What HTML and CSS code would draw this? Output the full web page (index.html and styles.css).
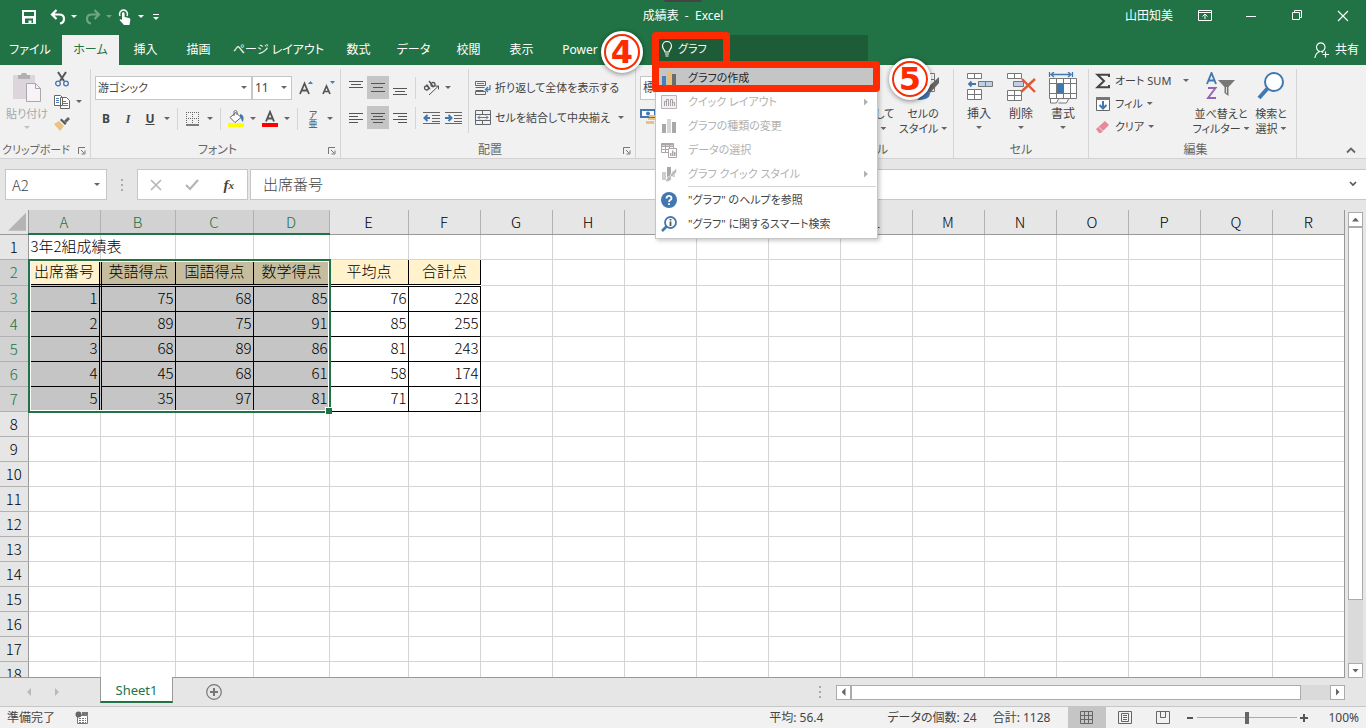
FILE: index.html
```html
<!DOCTYPE html>
<html lang="ja">
<head>
    <meta charset="utf-8">
    <title>成績表 - Excel</title>
    <link rel="stylesheet" href="styles.css">
</head>
<body>
    <header class="titlebar">
        <div class="quick-access">
            <button type="button" aria-label="上書き保存"><svg width="16" height="16"><path d="M1 1h14v14H1z" fill="#fff"/><path d="M3 3h10v4H3zM4 9.500h8V14h-1.500v-2.500h-3V14H4z" fill="#217346"/></svg></button>
            <button type="button" aria-label="元に戻す"><svg width="16" height="16"><path d="M6.500 1L2 5.500 6.500 10M2.500 5.500H9c7 0 6 8 1 9" fill="none" stroke="#fff" stroke-width="2.200"/></svg></button>
            <span class="caret light"></span>
            <button type="button" class="faded" aria-label="やり直し"><svg width="16" height="16"><path d="M9.500 1L14 5.500 9.500 10M13.500 5.500H7c-7 0-6 8-1 9" fill="none" stroke="#fff" stroke-width="2.200"/></svg></button>
            <span class="caret light faded"></span>
            <button type="button" aria-label="タッチ/マウス モード"><svg width="16" height="18"><path d="M3 8a4 4 0 1 1 7 0" fill="none" stroke="#fff" stroke-width="1.500"/><path d="M5 5.500c0-1.800 2.600-1.800 2.600 0V9l4.400 1c1 .3 1.500 1 1.300 2L12.500 17H7L2.500 12c.5-1 1.500-1 2.500 0z" fill="#fff"/></svg></button>
            <span class="caret light"></span>
            <button type="button" class="customize" aria-label="クイック アクセス ツール バーのカスタマイズ"><svg width="8" height="8"><path d="M1 1.500h6" stroke="#fff"/><path d="M1 4h6L4 7z" fill="#fff"/></svg></button>
        </div>
        <div class="doc-title">成績表&nbsp; - &nbsp;Excel</div>
        <div class="window-controls">
            <span class="user-name">山田知美</span>
            <button type="button" aria-label="リボンの表示オプション"><svg width="14" height="12"><path d="M.5.5h13v10H.5zM.5 2.500h13M7 9V4.500M4.500 6.500L7 4l2.500 2.500" fill="none" stroke="#fff"/></svg></button>
            <button type="button" aria-label="最小化"><svg width="12" height="12"><path d="M1 6.500h10" stroke="#fff"/></svg></button>
            <button type="button" aria-label="元のサイズに戻す"><svg width="11" height="11"><path d="M.5 2.500h7v7h-7zM2.500 2V.5h7v7H8" fill="none" stroke="#fff"/></svg></button>
            <button type="button" aria-label="閉じる"><svg width="12" height="12"><path d="M1 1l10 10M11 1L1 11" stroke="#fff" stroke-width="1.200"/></svg></button>
        </div>
        <span class="top-notch"></span>
    </header>

    <div class="tabbar">
        <nav class="tabs">
            <a href="#">ファイル</a>
            <a href="#" class="active">ホーム</a>
            <a href="#">挿入</a>
            <a href="#">描画</a>
            <a href="#">ページ レイアウト</a>
            <a href="#">数式</a>
            <a href="#">データ</a>
            <a href="#">校閲</a>
            <a href="#">表示</a>
            <a href="#">Power</a>
        </nav>
        <div class="tellme">
            <label class="tellme-box">
                <svg width="12" height="16"><path d="M4 11C4 9 1.500 8 1.500 5a4.500 4.500 0 0 1 9 0C10.500 8 8 9 8 11zM4 13h4M4.500 15h3" fill="none" stroke="#fff" stroke-width="1.200"/></svg>
                <input type="text" value="グラフ" aria-label="操作アシスト">
            </label>
            <div class="tellme-menu" role="menu">
                <button type="button" role="menuitem" class="highlight">
                    <svg width="16" height="16"><path d="M1 6h4v9H1z" fill="#4a7ebb"/><path d="M6 1h4v14H6z" fill="#e8bf7a"/><path d="M11 4h4v11h-4z" fill="#6b6b6b"/></svg>
                    <span>グラフの作成</span>
                </button>
                <button type="button" role="menuitem" disabled>
                    <svg width="16" height="16"><path d="M.5 1.500h15v13H.5z" fill="#f3f0f3" stroke="#b8b4b8"/><path d="M3.500 12V7.500h2M5.500 12V5.500h2V12M9.500 12V5.500h2V12M11.500 8.500h2V12" fill="none" stroke="#a5a1a5"/></svg>
                    <span>クイック レイアウト</span><i class="submenu-arrow"></i>
                </button>
                <button type="button" role="menuitem" disabled>
                    <svg width="16" height="16"><path d="M1 6h4v9H1zM11 4h4v11h-4z" fill="#aaa6aa"/><path d="M6 1h4v14H6z" fill="#d8d4d8"/></svg>
                    <span>グラフの種類の変更</span>
                </button>
                <button type="button" role="menuitem" disabled>
                    <svg width="16" height="16"><path d="M.5 1.500h12v9H.5zM.5 4.500h12M.5 7.500h12M4.500 1.500v9M8.500 1.500v9" fill="none" stroke="#aaa6aa"/><path d="M.5 1.500h12v2H.5z" fill="#aaa6aa"/><path d="M7.500 6.500h8v9h-8z" fill="#fff" stroke="#aaa6aa"/><path d="M9 11h1.500v3H9zM11 8.500h1.500V14H11zM13 10h1.500v4H13z" fill="#aaa6aa"/></svg>
                    <span>データの選択</span>
                </button>
                <button type="button" role="menuitem" disabled>
                    <svg width="16" height="16"><path d="M1 6h4v8H1zM11 5h3v6h-3z" fill="#d0ccd0"/><path d="M6 1h4v10H6z" fill="#aaa6aa"/><path d="M15.500 2L9 9l2 2 4.500-5zM8.500 10l2 2c0 3-4 4-6.500 3 2-1 1.500-4 4.500-5z" fill="#b8b4b8" stroke="#fff" stroke-width=".6"/></svg>
                    <span>グラフ クイック スタイル</span><i class="submenu-arrow"></i>
                </button>
                <hr>
                <button type="button" role="menuitem">
                    <svg width="16" height="16"><circle cx="8" cy="8" r="8" fill="#4178b0"/><path d="M5.500 6.500c0-3.500 5-3.300 5-.3 0 2-2.500 1.800-2.500 3.800M8 11.200v1.800" fill="none" stroke="#fff" stroke-width="1.800"/></svg>
                    <span>"グラフ" のヘルプを参照</span>
                </button>
                <button type="button" role="menuitem">
                    <svg width="16" height="16"><circle cx="9.500" cy="6.500" r="5.500" fill="none" stroke="#4178b0" stroke-width="1.800"/><path d="M5.500 10.500L1 15" stroke="#4178b0" stroke-width="2.600"/><path d="M9.500 3v1.600M9.500 5.600V10" stroke="#555" stroke-width="1.800"/></svg>
                    <span>"グラフ" に関するスマート検索</span>
                </button>
            </div>
            <span class="frame frame-search"></span>
            <span class="frame frame-item"></span>
            <span class="step step-four">4</span>
            <span class="step step-five">5</span>
        </div>
        <button type="button" class="share"><svg width="16" height="17"><path d="M7 9.500a4.300 4.300 0 1 0-.5 0C3 10 1.500 12.500.8 16M7 9.500c1 .3 1.500.5 2 1M11.500 9.500v6M8.500 12.500h6.500" fill="none" stroke="#fff" stroke-width="1.200"/></svg>共有</button>
    </div>

    <section class="ribbon">
        <div class="group clipboard">
            <div class="group-body">
                <button type="button" class="big disabled">
                    <svg width="30" height="30"><path d="M1 3h22v24H1z" fill="#dcd6dc"/><path d="M6 7V3h3c0-3 6-3 6 0h3v4z" fill="#b2aeb2"/><path d="M14.500 11.500h9l5 5v13h-14z" fill="#f7f4f8" stroke="#aaa6aa"/><path d="M23.500 11.500v5h5" fill="none" stroke="#aaa6aa"/></svg>
                    <span>貼り付け</span>
                    <span class="caret faded"></span>
                </button>
                <div class="stack">
                    <button type="button" aria-label="切り取り"><svg width="16" height="16"><path d="M4 1l6 9M12 1L6 10" stroke="#555" stroke-width="2"/><circle cx="4" cy="12.500" r="2.300" fill="none" stroke="#4178b0" stroke-width="1.300"/><circle cx="12" cy="12.500" r="2.300" fill="none" stroke="#4178b0" stroke-width="1.300"/></svg></button>
                    <div class="row">
                        <button type="button" aria-label="コピー"><svg width="16" height="15"><path d="M.5 1.500h6l2 2v8h-8zM6.500 3.500h6l3 3v8h-9z" fill="#fff" stroke="#666"/><path d="M2 4.500h3M2 6.500h3M2 8.500h3M8 7.500h4M8 9.500h6M8 11.500h6" stroke="#4a7ebb"/></svg></button>
                        <span class="caret"></span>
                    </div>
                    <button type="button" aria-label="書式のコピー/貼り付け"><svg width="16" height="15"><path d="M0 8l5-3 5 5-4 5z" fill="#eac283"/><path d="M6 4l5 5 1.500-1.500-5-5z" fill="#555"/><path d="M11 6l4-4" stroke="#666" stroke-width="3"/></svg></button>
                </div>
            </div>
            <div class="group-label">クリップボード</div>
            <button type="button" class="launcher" aria-label="クリップボードの詳細"><svg width="8" height="8"><path d="M.5 7V.5H7M3 3l3 3M7 3.500V7H3.500" fill="none" stroke="#777"/></svg></button>
        </div>

        <div class="group font">
            <div class="group-body column">
                <div class="row">
                    <label class="combo font-name"><select aria-label="フォント"><option>游ゴシック</option></select><span class="caret"></span></label>
                    <label class="combo font-size"><select aria-label="フォント サイズ"><option>11</option></select><span class="caret"></span></label>
                    <button type="button" class="grow-font" aria-label="フォント サイズの拡大"><svg width="16" height="16"><path d="M1 14L5.500 3.500 10 14M2.500 10.500h6" fill="none" stroke="#555" stroke-width="1.800"/><path d="M9 4l2.500-3L14 4z" fill="#4a7ebb"/></svg></button>
                    <button type="button" aria-label="フォント サイズの縮小"><svg width="16" height="16"><path d="M2 14L5.500 6 9 14M3 11.500h5" fill="none" stroke="#555" stroke-width="1.700"/><path d="M9 1h5l-2.500 3z" fill="#4a7ebb"/></svg></button>
                </div>
                <div class="row">
                    <button type="button" class="bold">B</button>
                    <button type="button" class="italic">I</button>
                    <button type="button" class="underline">U</button>
                    <span class="caret"></span>
                    <span class="sep"></span>
                    <button type="button" aria-label="罫線"><svg width="14" height="14"><path d="M.5 0v12M6.500 0v12M12.500 0v12M0 .5h13M0 6.500h13" stroke="#666" stroke-dasharray="1 1"/><path d="M0 13h13" stroke="#555" stroke-width="1.500"/></svg></button>
                    <span class="caret"></span>
                    <span class="sep"></span>
                    <button type="button" aria-label="塗りつぶしの色"><svg width="17" height="17"><path d="M2 7.500l6-5 5 5-6 5z" fill="#fff" stroke="#666"/><path d="M6 6V2c0-2 3-2 3 0v3" fill="none" stroke="#666"/><path d="M12 4c4 1 4 4 3 8-2-1-1-3-3-5z" fill="#4178b0"/><path d="M0 13h16v4H0z" fill="#ff0"/></svg></button>
                    <span class="caret"></span>
                    <button type="button" aria-label="フォントの色"><svg width="17" height="17"><path d="M4 11.500L8 2l4 9.500M5.500 8.500h5" fill="none" stroke="#555" stroke-width="1.900"/><path d="M0 13h16v4H0z" fill="red"/></svg></button>
                    <span class="caret"></span>
                    <span class="sep"></span>
                    <button type="button" class="ruby"><span>ア</span><span>亜</span></button>
                    <span class="caret"></span>
                </div>
            </div>
            <div class="group-label">フォント</div>
            <button type="button" class="launcher" aria-label="フォントの設定"><svg width="8" height="8"><path d="M.5 7V.5H7M3 3l3 3M7 3.500V7H3.500" fill="none" stroke="#777"/></svg></button>
        </div>

        <div class="group alignment">
            <div class="group-body">
                <div class="column align-tools">
                    <div class="row">
                        <button type="button" aria-label="上揃え"><svg width="14" height="16"><path d="M0 1.500h14M2 4.500h10M0 7.500h14" stroke="#555"/></svg></button>
                        <button type="button" class="pressed" aria-label="上下中央揃え"><svg width="14" height="16"><path d="M0 3.500h14M2 7.500h10M0 11.500h14" stroke="#555"/></svg></button>
                        <button type="button" aria-label="下揃え"><svg width="14" height="16"><path d="M0 8.500h14M2 11.500h10M0 14.500h14" stroke="#555"/></svg></button>
                        <span class="sep"></span>
                        <button type="button" aria-label="方向"><svg width="17" height="16"><circle cx="3.500" cy="8" r="2" fill="none" stroke="#555" stroke-width="1.300"/><path d="M3.500 4.500L7 9M6 1l4.500 6" stroke="#555" stroke-width="1.300"/><circle cx="10" cy="4.500" r="2" fill="none" stroke="#555" stroke-width="1.300"/><path d="M6 15l9.500-9M12 6h3.500v3.500" fill="none" stroke="#555"/></svg></button>
                        <span class="caret"></span>
                    </div>
                    <div class="row">
                        <button type="button" aria-label="左揃え"><svg width="14" height="14"><path d="M0 2.500h14M0 5.500h9M0 8.500h14M0 11.500h9" stroke="#555"/></svg></button>
                        <button type="button" class="pressed" aria-label="中央揃え"><svg width="14" height="14"><path d="M0 2.500h14M2 5.500h10M0 8.500h14M2 11.500h10" stroke="#555"/></svg></button>
                        <button type="button" aria-label="右揃え"><svg width="14" height="14"><path d="M0 2.500h14M5 5.500h9M0 8.500h14M5 11.500h9" stroke="#555"/></svg></button>
                        <span class="sep"></span>
                        <button type="button" aria-label="インデントを減らす"><svg width="17" height="14"><path d="M0 1.500h17M9 4.500h8M9 7.500h8M9 10.500h8M0 12.500h17" stroke="#666"/><path d="M7 7H2M4.500 4L1.500 7l3 3" fill="none" stroke="#4178b0" stroke-width="2"/></svg></button>
                        <button type="button" aria-label="インデントを増やす"><svg width="17" height="14"><path d="M0 1.500h17M9 4.500h8M9 7.500h8M9 10.500h8M0 12.500h17" stroke="#666"/><path d="M0 7h5M3.500 4l3 3-3 3" fill="none" stroke="#4178b0" stroke-width="2"/></svg></button>
                    </div>
                </div>
                <div class="column wrap-tools">
                    <button type="button" class="wide"><svg width="16" height="16"><path d="M.5 1.500h10v4H.5zM.5 7.500h9M.5 10.500h8M.5 14.500h10v-3H.5z" fill="none" stroke="#666"/><path d="M2 3.500h7" stroke="#4a7ebb"/><path d="M15 5v4.500h-4M13 7l-2.500 2.500L13 12" fill="none" stroke="#4a7ebb" stroke-width="1.300"/></svg><span>折り返して全体を表示する</span></button>
                    <div class="row">
                        <button type="button" class="wide"><svg width="16" height="16"><path d="M.5.5h15v14H.5zM.5 4.500h15M.5 10.500h15M7.500.5v4M7.500 10.500v4" fill="none" stroke="#666"/><path d="M3 7.500h10M5 5.500l-2 2 2 2M11 5.500l2 2-2 2" fill="none" stroke="#4a7ebb"/></svg><span>セルを結合して中央揃え</span></button>
                        <span class="caret"></span>
                    </div>
                </div>
            </div>
            <div class="group-label">配置</div>
            <button type="button" class="launcher" aria-label="配置の設定"><svg width="8" height="8"><path d="M.5 7V.5H7M3 3l3 3M7 3.500V7H3.500" fill="none" stroke="#777"/></svg></button>
        </div>

        <div class="group number-format">
            <div class="group-body column">
                <label class="combo"><select aria-label="表示形式"><option>標準</option></select><span class="caret"></span></label>
                <div class="row">
                    <button type="button" aria-label="通貨表示形式"><svg width="16" height="16"><path d="M1 2h14v7H1z" fill="#fff" stroke="#4178b0" stroke-width="2"/><circle cx="8" cy="5.500" r="2" fill="#4178b0"/><path d="M9 7h7v2H9zM8 10h8v2H8zM6 13h8v3H6z" fill="#eac283"/></svg></button>
                </div>
            </div>
        </div>

        <div class="group styles">
            <div class="group-body">
                <button type="button" class="big two-line table-style"><svg width="28" height="28"><path d="M1.500 3.500h24v22h-24zM1.500 9.500h24M1.500 15.500h24M9.500 3.500v22M17.500 3.500v22" fill="#fff" stroke="#777"/></svg><span>テーブルとして<br>書式設定 <i class="caret"></i></span></button>
                <button type="button" class="big two-line cell-style"><svg width="36" height="30"><path d="M4.500 1.500h25v18h-25zM4.500 7.500h25M4.500 13.500h25M24.500 1.500v18" fill="#fff" stroke="#777"/><path d="M34 5v6l-9 10-4-4z" fill="#666"/><path d="M21 17l4 4c0 6-6 7-13 7 4-2 4-9 9-11z" fill="#4178b0"/></svg><span>セルの<br>スタイル <i class="caret"></i></span></button>
            </div>
            <div class="group-label">スタイル</div>
        </div>

        <div class="group cells">
            <div class="group-body">
                <button type="button" class="big"><svg width="28" height="30"><path d="M2.500 1.500h14v5h-14zM9.500 1.500v5M2.500 17.500h14v10h-14zM2.500 22.500h14M9.500 17.500v10" fill="#fff" stroke="#777"/><path d="M13.500 9.500h14v5h-14zM20.500 9.500v5" fill="#bdd0e9" stroke="#777"/><path d="M11 12H4M6.500 9.500L4 12l2.500 2.500" fill="none" stroke="#4178b0" stroke-width="1.800"/></svg><span>挿入</span><span class="caret"></span></button>
                <button type="button" class="big"><svg width="30" height="30"><path d="M1.500 1.500h14v5h-14zM8.500 1.500v5M1.500 18.500h14v10h-14zM1.500 23.500h14M8.500 18.500v10" fill="#fff" stroke="#777"/><path d="M7.500 9.500h10v5h-10z" fill="#bdd0e9" stroke="#777"/><path d="M16 7l13 13M29 7L15 20" stroke="#dd5b37" stroke-width="2.400"/></svg><span>削除</span><span class="caret"></span></button>
                <button type="button" class="big"><svg width="30" height="32"><path d="M1.500 0v5M24.500 0v5M3 2.500h20M6 0L3 2.500l3 2.500M20 0l3 2.500-3 2.500" fill="none" stroke="#4178b0" stroke-width="1.300"/><path d="M2.500 26v5h6l2-4M10.500 31h8l2-4" fill="#fff" stroke="#777"/><path d="M1.500 6.500h27v20h-27zM1.500 11.500h27M1.500 21.500h27M8.500 6.500v20M15.500 6.500v20M22.500 6.500v20" fill="#fff" stroke="#777"/><path d="M9 12h7v9H9z" fill="#4178b0"/></svg><span>書式</span><span class="caret"></span></button>
            </div>
            <div class="group-label">セル</div>
        </div>

        <div class="group editing">
            <div class="group-body">
                <div class="edit-list">
                    <button type="button" class="wide"><svg width="16" height="16"><path d="M14 4V1.800H2.500L9 8l-6.500 6.200H14V12" fill="none" stroke="#444" stroke-width="2"/></svg><span>オート SUM</span><span class="caret"></span></button>
                    <button type="button" class="wide"><svg width="16" height="16"><path d="M1.500 1.500h13v13h-13z" fill="#fff" stroke="#666"/><path d="M1 1h14v3H1z" fill="#777"/><path d="M8 5v7M4.500 9L8 12.500 11.500 9" fill="none" stroke="#4178b0" stroke-width="2"/></svg><span>フィル</span><span class="caret"></span></button>
                    <button type="button" class="wide"><svg width="16" height="16"><path d="M1 10l9-8 4 4-8 8H4z" fill="#e8899b"/><path d="M3.500 8l4.500 4" stroke="#f6dbe0"/></svg><span>クリア</span><span class="caret"></span></button>
                </div>
                <button type="button" class="big two-line sort"><svg width="30" height="30"><path d="M1 12L5.500 1 10 12M2.500 8.500h6" fill="none" stroke="#4178b0" stroke-width="1.900"/><path d="M2 16h7.500L2 26h8" fill="none" stroke="#9562b6" stroke-width="1.900"/><path d="M12 8h17l-6.500 7v9l-4-3v-6z" fill="#777"/><path d="M20.500 15v6" stroke="#ddd"/></svg><span>並べ替えと<br>フィルター <i class="caret"></i></span></button>
                <button type="button" class="big two-line find"><svg width="30" height="30"><circle cx="18" cy="10" r="9" fill="#fff" stroke="#4178b0" stroke-width="2"/><path d="M11.500 16.500L3 26" stroke="#4178b0" stroke-width="4"/></svg><span>検索と<br>選択 <i class="caret"></i></span></button>
            </div>
            <div class="group-label">編集</div>
        </div>
        <button type="button" class="collapse" aria-label="リボンを折りたたむ"><svg width="10" height="8"><path d="M1 6.500L5 2.500l4 4" fill="none" stroke="#666" stroke-width="1.800"/></svg></button>
    </section>

    <div class="formula-bar">
        <label class="name-box"><input type="text" value="A2" aria-label="名前ボックス"><span class="caret"></span></label>
        <span class="grip"></span>
        <div class="formula-buttons">
            <button type="button" aria-label="キャンセル"><svg width="12" height="12"><path d="M1 1l10 10M11 1L1 11" stroke="#b5b5b5" stroke-width="1.600"/></svg></button>
            <button type="button" aria-label="入力"><svg width="14" height="12"><path d="M1 6l4 4 8-9" fill="none" stroke="#b5b5b5" stroke-width="2.200"/></svg></button>
            <button type="button" class="fx" aria-label="関数の挿入">f<small>x</small></button>
        </div>
        <label class="formula"><input type="text" value="出席番号" aria-label="数式バー"><svg width="8" height="6"><path d="M1 1l3 3 3-3" fill="none" stroke="#555" stroke-width="1.600"/></svg></label>
    </div>

    <main class="workspace">
        <div class="sheet">
            <table id="grid"></table>
            <div class="selection"><span class="fill-handle"></span></div>
        </div>
        <div class="scroll-v">
            <button type="button" aria-label="上へ"><i class="arrow up"></i></button>
            <span class="thumb"></span>
            <button type="button" aria-label="下へ"><i class="arrow down"></i></button>
        </div>
    </main>

    <div class="sheet-tabs">
        <div class="sheet-nav"><i class="arrow left"></i><i class="arrow right"></i></div>
        <a href="#" class="sheet-tab">Sheet1</a>
        <button type="button" class="add-sheet" aria-label="新しいシート"><svg width="16" height="16"><circle cx="8" cy="8" r="7.300" fill="none" stroke="#777" stroke-width="1.200"/><path d="M8 4v8M4 8h8" stroke="#777" stroke-width="2"/></svg></button>
        <span class="grip"></span>
        <div class="scroll-h">
            <button type="button" aria-label="左へ"><i class="arrow left"></i></button>
            <span class="thumb"></span>
            <button type="button" aria-label="右へ"><i class="arrow right"></i></button>
        </div>
    </div>

    <footer class="statusbar">
        <span>準備完了</span>
        <svg class="macro" width="14" height="14"><path d="M2.500 4.500h10v8h-10z" fill="#fff" stroke="#777"/><path d="M7 1h6v3H7z" fill="#777"/><circle cx="3.500" cy="3.500" r="3" fill="#666"/><path d="M4 7.500h7M4 9.500h7M4 11.500h7" stroke="#777" stroke-dasharray="2 1"/></svg>
        <div class="stats">
            <span class="average">平均: 56.4</span>
            <span>データの個数: 24</span>
            <span>合計: 1128</span>
        </div>
        <div class="views">
            <button type="button" class="pressed" aria-label="標準"><svg width="14" height="14"><path d="M.5.5h12v12H.5zM.5 4.500h12M.5 8.500h12M4.500.5v12M8.500.5v12" fill="none" stroke="#666"/></svg></button>
            <button type="button" aria-label="ページ レイアウト"><svg width="14" height="14"><path d="M.5.5h13v12H.5zM3.500 2.500h7v8h-7zM5 4.500h4M5 6.500h4M5 8.500h4" fill="none" stroke="#666"/></svg></button>
            <button type="button" aria-label="改ページ プレビュー"><svg width="14" height="14"><path d="M.5.5h13v12H.5zM4.500.5v6h5v-6M9.500 6.500h-5" fill="none" stroke="#666"/></svg></button>
        </div>
        <div class="zoom">
            <button type="button" aria-label="縮小"><svg width="8" height="8"><path d="M1 4h6" stroke="#555" stroke-width="2"/></svg></button>
            <input type="range" min="0" max="200" value="100" aria-label="ズーム">
            <button type="button" aria-label="拡大"><svg width="8" height="8"><path d="M0 4h8M4 0v8" stroke="#555" stroke-width="2"/></svg></button>
            <span class="zoom-value">100%</span>
        </div>
    </footer>

    <script src="script.js"></script>
</body>
</html>
```
FILE: styles.css
```css
* {
    box-sizing: border-box;
}

body {
    margin: 0;
    height: 100vh;
    display: flex;
    flex-direction: column;
    overflow: hidden;
    background: #e6e6e6;
    color: #444;
    font: 12px/16px "Noto Sans", "Noto Sans CJK JP", sans-serif;
    font-feature-settings: "palt";
}

button,
input,
select {
    font: inherit;
    font-feature-settings: inherit;
    color: inherit;
    background: none;
    border: 0;
    padding: 0;
    margin: 0;
    min-width: 0;
}

button {
    display: flex;
    align-items: center;
    justify-content: center;
    white-space: nowrap;
}

a {
    color: inherit;
    text-decoration: none;
}

svg {
    display: block;
    flex: none;
}

.row {
    display: flex;
    align-items: center;
}

.column {
    display: flex;
    flex-direction: column;
}

.caret {
    display: inline-block;
    flex: none;
    width: 6px;
    height: 3px;
    background: #666;
    clip-path: polygon(0 0, 100% 0, 50% 100%);
}

.caret.light {
    background: #fff;
}

.faded {
    opacity: 0.35;
}

/* title bar */
.titlebar {
    flex: none;
    height: 35px;
    display: grid;
    grid-template-columns: 1fr auto 1fr;
    align-items: center;
    background: #217346;
    color: #fff;
    position: relative;
}

.quick-access {
    display: flex;
    align-items: center;
    gap: 5px;
    padding: 0 0 2px 21px;
}

.quick-access button:nth-child(2) {
    margin-left: 8px;
}

.quick-access .caret + button {
    margin-left: 3px;
}

.quick-access .faded + button {
    margin-left: 0;
}

.quick-access .customize {
    margin-left: 9px;
}

.doc-title {
    padding-bottom: 4px;
}

.window-controls {
    display: flex;
    justify-content: flex-end;
    padding-bottom: 4px;
}

.window-controls button {
    width: 46px;
}

.window-controls .user-name {
    margin-right: 9px;
}

.top-notch {
    position: absolute;
    left: 664px;
    top: 0;
    width: 38px;
    height: 2px;
    border-radius: 0 0 2px 2px;
    background: #444;
}

/* ribbon tabs */
.tabbar {
    flex: none;
    height: 30px;
    display: flex;
    background: #217346;
    color: #fff;
}

.tabs {
    display: grid;
    grid-template-columns: 60px 59px 53px 53px 107px 53px 57px 53px 53px 64px;
    width: 654px;
}

.tabs a {
    text-align: center;
    line-height: 29px;
    white-space: nowrap;
}

.tabs .active {
    margin-left: 2px;
    background: #f1f1f1;
    color: #217346;
}

.share {
    gap: 5px;
    margin-left: auto;
    padding-right: 7px;
}

/* search box and its result menu */
.tellme {
    position: relative;
    z-index: 2;
    width: 214px;
    height: 27px;
    font-size: 11px;
}

.tellme-box {
    display: flex;
    align-items: center;
    gap: 5px;
    height: 27px;
    padding-left: 7px;
    background: #1e5c38;
}

.tellme-box input {
    width: 150px;
}

.tellme-menu {
    position: absolute;
    left: 1px;
    top: 29px;
    width: 223px;
    padding: 1px 1px 2px;
    background: #fff;
    border: 1px solid #c6c6c6;
    box-shadow: 2px 2px 4px rgba(0, 0, 0, 0.2);
    color: #444;
}

.tellme-menu button {
    width: 100%;
    height: 24px;
    justify-content: flex-start;
    gap: 11px;
    padding: 0 8px 0 4px;
}

.tellme-menu .highlight {
    background: #c5c5c5;
    color: #262626;
}

.tellme-menu button:disabled {
    color: #b1b1b1;
}

.tellme-menu hr {
    margin: 0 0 1px 31px;
    border: 0;
    border-top: 1px solid #d5d5d5;
}

.submenu-arrow {
    width: 4px;
    height: 7px;
    margin-left: auto;
    background: #b1b1b1;
    clip-path: polygon(0 0, 100% 50%, 0 100%);
}

.frame {
    position: absolute;
    left: -2px;
    border: 7px solid #ff2a00;
    border-radius: 4px;
}

.frame-search {
    top: -3px;
    width: 78px;
    height: 36px;
}

.frame-item {
    top: 26px;
    width: 228px;
    height: 31px;
}

.step {
    position: absolute;
    width: 36px;
    height: 36px;
    border: 2px solid #ff2a00;
    border-radius: 50%;
    outline: 3px solid #fff;
    background: #fff;
    box-shadow: 0 1px 5px 3px rgba(0, 0, 0, 0.45);
    color: #ff2a00;
    font: bold 32px/32px "DejaVu Sans", sans-serif;
    text-align: center;
}

.step-four {
    left: -50px;
    top: -1px;
}

.step-five {
    left: 238px;
    top: 26px;
}

/* ribbon */
.ribbon {
    flex: none;
    height: 94px;
    display: flex;
    background: #f1f1f1;
    border-bottom: 1px solid #d2d2d2;
}

.group {
    position: relative;
    flex: none;
    display: flex;
    flex-direction: column;
    height: 89px;
    margin-top: 4px;
    border-right: 1px solid #d5d5d5;
}

.group-body {
    display: flex;
    height: 73px;
}

.group-body.column {
    gap: 8px;
    padding-top: 7px;
}

.group-label {
    line-height: 16px;
    text-align: center;
    white-space: nowrap;
    color: #666;
}

.launcher {
    position: absolute;
    right: 4px;
    bottom: 3px;
}

.sep {
    width: 1px;
    height: 22px;
    margin: 0 4px;
    background: #d5d5d5;
}

.big {
    flex-direction: column;
    justify-content: flex-start;
    padding-top: 3px;
}

.big svg {
    height: 34px;
}

.big .caret {
    margin-top: 4px;
}

.big.disabled {
    color: #a6a6a6;
    font-size: 11px;
}

.big.two-line {
    font-size: 11px;
}

.big.two-line span {
    line-height: 15px;
}

.big.two-line .caret {
    margin: 0 0 3px;
}

.pressed {
    background: #c5c5c5;
}

.combo {
    display: grid;
    align-items: center;
    height: 24px;
    background: #fff;
    border: 1px solid #c6c6c6;
}

.combo select,
.combo .caret {
    grid-area: 1 / 1;
}

.combo select {
    appearance: none;
    width: 100%;
    padding-left: 2px;
}

.combo .caret {
    justify-self: end;
    margin-right: 4px;
}

.clipboard {
    width: 91px;
}

.clipboard .group-label {
    padding-right: 18px;
    font-size: 11px;
}

.clipboard .big {
    width: 54px;
}

.stack {
    display: flex;
    flex-direction: column;
    gap: 7px;
    padding-top: 2px;
}

.stack button {
    width: 16px;
}

.stack .row {
    gap: 6px;
}

.font {
    width: 250px;
    padding-left: 4px;
}

.font .row {
    height: 23px;
}

.font .row > button {
    width: 22px;
    height: 22px;
}

.font .row > .caret {
    margin: 0 3px;
}

.font-name {
    width: 157px;
    font-size: 11px;
}

.font-size {
    width: 40px;
}

.font .row > .grow-font {
    margin-left: 4px;
}

.bold {
    font-weight: bold;
}

.italic {
    font-family: "Liberation Serif", serif;
    font-style: italic;
    font-weight: bold;
}

.underline {
    font-weight: bold;
    text-decoration: underline;
}

.ruby {
    flex-direction: column;
    font-size: 9px;
    line-height: 9px;
}

.alignment {
    width: 295px;
    padding-left: 4px;
}

.align-tools,
.wrap-tools {
    gap: 7px;
    padding-top: 7px;
}

.align-tools {
    width: 124px;
    height: 64px;
    border-right: 1px solid #d5d5d5;
}

.align-tools .row > button {
    width: 22px;
    height: 23px;
}

.align-tools .caret {
    margin-left: 3px;
}

.wrap-tools {
    padding-left: 6px;
}

.wrap-tools .row {
    gap: 8px;
}

.wide {
    height: 23px;
    gap: 4px;
    justify-content: flex-start;
    font-size: 11px;
}

.number-format {
    width: 144px;
    padding-left: 4px;
}

.number-format .combo {
    width: 110px;
}

.styles {
    width: 174px;
}

.styles .group-body {
    justify-content: flex-end;
    padding-right: 4px;
}

.table-style {
    width: 74px;
}

.cell-style {
    width: 52px;
}

.cells {
    width: 135px;
}

.cells .group-body {
    padding-left: 4px;
}

.cells .big {
    width: 42px;
}

.editing {
    width: 208px;
    padding-left: 6px;
}

.edit-list {
    width: 98px;
}

.editing .wide:first-child .caret {
    margin-left: auto;
    margin-right: 4px;
}

.edit-list .wide {
    width: 100%;
}

.sort {
    width: 56px;
}

.find {
    width: 44px;
}

.collapse {
    align-self: flex-end;
    margin: 0 10px 4px auto;
}

/* formula bar */
.formula-bar {
    flex: none;
    display: flex;
    height: 51px;
    padding: 10px 0;
}

.name-box,
.formula-buttons,
.formula {
    display: flex;
    align-items: center;
    height: 31px;
    background: #fff;
    border: 1px solid #c6c6c6;
}

.name-box,
.formula {
    font-family: "Noto Sans CJK JP", sans-serif;
    font-size: 15px;
    font-weight: 300;
    font-feature-settings: normal;
}

.name-box {
    width: 102px;
    margin-left: 5px;
    padding: 0 6px;
}

.name-box input {
    flex: 1;
}

.grip {
    align-self: center;
    width: 2px;
    height: 12px;
    background: repeating-linear-gradient(#aaa 0 2px, transparent 2px 5px);
}

.formula-bar .grip {
    margin: 0 14px;
}

.formula-buttons {
    width: 111px;
    justify-content: space-around;
}

.formula-buttons button {
    width: 36px;
}

.fx {
    font: italic bold 15px/20px "Liberation Serif", serif;
}

.fx small {
    font-size: 11px;
}

.formula {
    flex: 1;
    margin-left: 2px;
    padding: 0 9px 2px 12px;
    border-right: 0;
}

.formula input {
    flex: 1;
}

/* worksheet */
.workspace {
    flex: 1;
    min-height: 0;
    display: flex;
}

.sheet {
    flex: 1;
    min-width: 0;
    position: relative;
    overflow: hidden;
    background: #fff;
    border-right: 1px solid #999;
    border-bottom: 1px solid #999;
}

#grid {
    width: 100%;
    table-layout: fixed;
    border-collapse: collapse;
    color: #000;
    font-family: "Noto Sans CJK JP", sans-serif;
    font-size: 15px;
    font-weight: 300;
    line-height: 20px;
    font-feature-settings: normal;
}

#grid th,
#grid td {
    height: 25px;
    padding: 0 1px 1px 2px;
    border: 1px solid #d4d4d4;
    white-space: nowrap;
}

#grid th {
    padding: 0;
    background: #e6e6e6;
    border-color: #b1b1b1;
    font-weight: 300;
}

#grid thead th {
    height: 24px;
    border-top: 0;
    border-bottom-color: #999;
}

#grid th:first-child {
    border-left: 0;
    border-right-color: #999;
}

#grid th.selected {
    background: #d2d2d2;
    color: #217346;
}

#grid thead th.selected {
    border-bottom: 2px solid #217346;
}

#grid th:last-child,
#grid td:last-child {
    border-right: 0;
}

#grid .title {
    border-right: 0;
}

#grid .number {
    border-color: #000;
    text-align: right;
}

#grid .heading {
    height: 26px;
    border-color: #000;
    border-bottom: 3px double #000;
    background: #fff2cc;
    text-align: center;
}

/* room for the double rule above the first score row */
#grid .first {
    height: 26px;
}

#grid .id {
    border-right: 3px double #000;
}

#grid .number.selected {
    background: #c5c5c5;
}

#grid .heading.selected {
    background: #c6bd9e;
}

.select-all {
    width: 18px;
    height: 18px;
    margin-left: 8px;
    background: #b4b4b4;
    clip-path: polygon(100% 0, 100% 100%, 0 100%);
}

.selection {
    position: absolute;
    left: 28px;
    top: 49px;
    width: 303px;
    height: 154px;
    border: 2px solid #217346;
    box-shadow: inset 0 0 0 1px #fff;
}

.fill-handle {
    position: absolute;
    right: -3px;
    bottom: -3px;
    width: 7px;
    height: 7px;
    background: #217346;
    border: solid #fff;
    border-width: 1px 0 0 1px;
}

/* scroll bars */
.scroll-v {
    width: 15px;
    margin: 2px 3px 0;
    display: flex;
    flex-direction: column;
    background: #dadada;
}

.scroll-v button,
.scroll-h button {
    flex: none;
    width: 15px;
    height: 15px;
    background: #fff;
    border: 1px solid #ababab;
}

.thumb {
    background: #fff;
    border: 1px solid #ababab;
}

.scroll-v .thumb {
    flex: 0 0 80%;
    margin-bottom: auto;
}

.arrow {
    width: 7px;
    height: 4px;
    background: #666;
}

.arrow.up {
    clip-path: polygon(50% 0, 100% 100%, 0 100%);
}

.arrow.down {
    clip-path: polygon(0 0, 100% 0, 50% 100%);
}

.arrow.left,
.arrow.right {
    width: 4px;
    height: 8px;
}

.arrow.left {
    clip-path: polygon(100% 0, 100% 100%, 0 50%);
}

.arrow.right {
    clip-path: polygon(0 0, 100% 50%, 0 100%);
}

/* sheet tabs */
.sheet-tabs {
    flex: none;
    display: flex;
    align-items: center;
    height: 28px;
}

.sheet-nav {
    display: flex;
    gap: 24px;
    width: 100px;
    padding-left: 27px;
    opacity: 0.35;
}

.sheet-tab {
    align-self: flex-start;
    width: 73px;
    height: 26px;
    margin-top: -1px;
    z-index: 1;
    background: #fff;
    border: solid #999;
    border-width: 0 1px;
    border-bottom: 2px solid #217346;
    color: #217346;
    font-size: 13px;
    line-height: 27px;
    text-align: center;
}

.add-sheet {
    margin-left: 33px;
}

.sheet-tabs .grip {
    margin: 0 15px 0 auto;
}

.scroll-h {
    display: flex;
    width: 509px;
    margin-right: 21px;
    background: #dadada;
}

.scroll-h .thumb {
    flex: 1;
    margin-right: 29px;
}

/* status bar */
.statusbar {
    flex: none;
    display: flex;
    align-items: center;
    height: 22px;
    padding-left: 7px;
    background: #f1f1f1;
    border-top: 1px solid #c6c6c6;
}

.macro {
    margin-left: 20px;
}

.stats {
    display: flex;
    gap: 16px;
    margin-left: auto;
    padding-right: 18px;
}

.average {
    margin-right: 48px;
}

.views {
    display: flex;
}

.views button {
    width: 38px;
    height: 21px;
}

.zoom {
    display: flex;
    align-items: center;
    gap: 3px;
    padding: 0 7px 0 4px;
}

.zoom input {
    appearance: none;
    width: 100px;
    height: 14px;
    background: linear-gradient(#ababab, #ababab) center / 100% 1px no-repeat;
}

.zoom input::-webkit-slider-thumb {
    appearance: none;
    width: 4px;
    height: 12px;
    background: #666;
}

.zoom-value {
    padding-left: 17px;
}
```
FILE: script.js
```js
const columns = "ABCDEFGHIJKLMNOPQR".split("");
const widths = [72, 75, 78, 76, 79, 72, 72, 72, 72, 72, 72, 72, 72, 72, 72, 72, 72];
const lastRow = 18;

const headings = ["出席番号", "英語得点", "国語得点", "数学得点", "平均点", "合計点"];
const scores = [
    [1, 75, 68, 85, 76, 228],
    [2, 89, 75, 91, 85, 255],
    [3, 68, 89, 86, 81, 243],
    [4, 45, 68, 61, 58, 174],
    [5, 35, 97, 81, 71, 213]
];

// selected range is A2:D7, A2 is the active cell
function isSelected(row, col) {
    return row >= 2 && row <= 7 && col < 4;
}

function cell(row, col) {
    const classes = [];
    let text = "";
    if (row === 1 && col === 0) {
        classes.push("title");
        text = "3年2組成績表";
    }
    if (row >= 2 && row <= 7 && col < 6) {
        classes.push(row === 2 ? "heading" : "number");
        text = row === 2 ? headings[col] : scores[row - 3][col];
        if (row === 3) classes.push("first");
        if (col === 0) classes.push("id");
        if (isSelected(row, col) && !(row === 2 && col === 0)) classes.push("selected");
    }
    return `<td class="${classes.join(" ")}">${text}</td>`;
}

let html = "<colgroup><col style=\"width:28px\">";
html += widths.map(w => `<col style="width:${w}px">`).join("") + "<col></colgroup>";

html += "<thead><tr><th><div class=\"select-all\"></div></th>";
html += columns.map((name, i) => `<th class="${i < 4 ? "selected" : ""}">${name}</th>`).join("");
html += "</tr></thead><tbody>";

for (let row = 1; row <= lastRow; row++) {
    html += `<tr><th class="${isSelected(row, 0) ? "selected" : ""}">${row}</th>`;
    html += columns.map((name, col) => cell(row, col)).join("");
    html += "</tr>";
}

document.getElementById("grid").innerHTML = html + "</tbody>";
```
